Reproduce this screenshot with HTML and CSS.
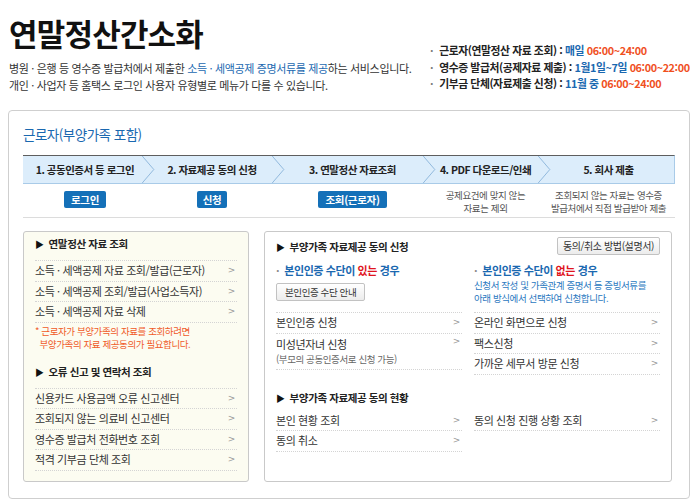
FILE: index.html
```html
<!DOCTYPE html>
<html lang="ko">

<head>
    <meta charset="UTF-8">
    <meta name="viewport" content="width=device-width, initial-scale=1.0">
    <title>연말정산간소화</title>
    <link rel="stylesheet" href="styles.css">
</head>

<body>

    <div class="top">
        <div class="intro">
            <h1>연말정산간소화</h1>
            <p>병원 · 은행 등 영수증 발급처에서 제출한 <span class="blue">소득 · 세액공제 증명서류를 제공</span>하는 서비스입니다.<br>
                개인 · 사업자 등 홈택스 로그인 사용자 유형별로 메뉴가 다를 수 있습니다.</p>
        </div>
        <ul class="hours">
            <li>근로자(연말정산 자료 조회) : <span class="blue">매일</span> <span class="orange">06:00~24:00</span></li>
            <li>영수증 발급처(공제자료 제출) : <span class="blue">1월1일~7일</span> <span class="orange">06:00~22:00</span></li>
            <li>기부금 단체(자료제출 신청) : <span class="blue">11월 중</span> <span class="orange">06:00~24:00</span></li>
        </ul>
    </div>

    <div class="card">
        <h2 class="card-title">근로자(부양가족 포함)</h2>

        <div class="steps">
            <div class="step s1">1. 공동인증서 등 로그인
                <svg class="chev" viewBox="0 0 13 28"><polyline points="0,0 12,14 0,28" /></svg>
            </div>
            <div class="step s2">2. 자료제공 동의 신청
                <svg class="chev" viewBox="0 0 13 28"><polyline points="0,0 12,14 0,28" /></svg>
            </div>
            <div class="step s3">3. 연말정산 자료조회
                <svg class="chev" viewBox="0 0 13 28"><polyline points="0,0 12,14 0,28" /></svg>
            </div>
            <div class="step s4">4. PDF 다운로드/인쇄
                <svg class="chev" viewBox="0 0 13 28"><polyline points="0,0 12,14 0,28" /></svg>
            </div>
            <div class="step s5">5. 회사 제출</div>
        </div>

        <div class="step-actions">
            <div class="act s1"><span class="blue-btn">로그인</span></div>
            <div class="act s2"><span class="blue-btn">신청</span></div>
            <div class="act s3"><span class="blue-btn">조회(근로자)</span></div>
            <div class="act s4"><p class="act-note">공제요건에 맞지 않는<br>자료는 제외</p></div>
            <div class="act s5"><p class="act-note">조회되지 않는 자료는 영수증<br>발급처에서 직접 발급받아 제출</p></div>
        </div>

        <div class="panels">
            <div class="panel panel-left">
                <h3 class="ph">연말정산 자료 조회</h3>
                <ul class="links">
                    <li>소득 · 세액공제 자료 조회/발급(근로자)</li>
                    <li>소득 · 세액공제 조회/발급(사업소득자)</li>
                    <li>소득 · 세액공제 자료 삭제</li>
                </ul>
                <p class="warn">* 근로자가 부양가족의 자료를 조회하려면<br>&nbsp;&nbsp;부양가족의 자료 제공동의가 필요합니다.</p>

                <h3 class="ph">오류 신고 및 연락처 조회</h3>
                <ul class="links">
                    <li>신용카드 사용금액 오류 신고센터</li>
                    <li>조회되지 않는 의료비 신고센터</li>
                    <li>영수증 발급처 전화번호 조회</li>
                    <li>적격 기부금 단체 조회</li>
                </ul>
            </div>

            <div class="panel panel-right">
                <div class="ph-row">
                    <h3 class="ph">부양가족 자료제공 동의 신청</h3>
                    <span class="gray-btn">동의/취소 방법(설명서)</span>
                </div>

                <div class="cols">
                    <div class="col">
                        <div class="sub-top">
                            <h4 class="sub">본인인증 수단이 <em>있는</em> 경우</h4>
                            <span class="gray-btn small">본인인증 수단 안내</span>
                        </div>
                        <ul class="links">
                            <li>본인인증 신청</li>
                            <li class="tall">미성년자녀 신청<br><span class="muted">(부모의 공동인증서로 신청 가능)</span></li>
                        </ul>
                    </div>
                    <div class="col">
                        <div class="sub-top">
                            <h4 class="sub">본인인증 수단이 <em>없는</em> 경우</h4>
                            <p class="sub-note">신청서 작성 및 가족관계 증명서 등 증빙서류를<br>아래 방식에서 선택하여 신청합니다.</p>
                        </div>
                        <ul class="links">
                            <li>온라인 화면으로 신청</li>
                            <li>팩스신청</li>
                            <li>가까운 세무서 방문 신청</li>
                        </ul>
                    </div>
                </div>

                <h3 class="ph ph-second">부양가족 자료제공 동의 현황</h3>
                <div class="cols">
                    <ul class="links col no-top">
                        <li>본인 현황 조회</li>
                        <li>동의 취소</li>
                    </ul>
                    <ul class="links col no-top">
                        <li>동의 신청 진행 상황 조회</li>
                    </ul>
                </div>
            </div>
        </div>
    </div>

</body>

</html>
```

FILE: styles.css
```css
* {
    margin: 0;
    padding: 0;
    box-sizing: border-box;
}

html,
body {
    overflow: hidden;
}

body {
    background-color: #fff;
    color: #222;
    font-family: "Noto Sans CJK KR", "Noto Sans", sans-serif;
    font-size: 11px;
    width: 690px;
}

ul {
    list-style: none;
}

.blue {
    color: #1a68b0;
}

.orange {
    color: #f0501e;
}

/* header */
.top {
    display: flex;
    padding: 14px 0 0 9px;
    height: 110px;
}

.intro {
    width: 421px;
}

.intro h1 {
    font-size: 31px;
    font-weight: bold;
    line-height: 38px;
    letter-spacing: -0.8px;
    color: #111;
}

.intro p {
    margin-top: 8px;
    font-size: 11px;
    line-height: 17px;
    letter-spacing: -0.35px;
    color: #333;
}

.hours {
    margin-top: 28px;
    white-space: nowrap;
}

.hours li {
    font-weight: bold;
    font-size: 10.8px;
    line-height: 16.5px;
    letter-spacing: -0.4px;
    color: #222;
}

.hours li::before {
    content: "·";
    color: #777;
    margin-right: 6px;
}

/* card */
.card {
    margin-left: 8px;
    width: 682px;
    height: 389px;
    border: 1px solid #cfcfcf;
    border-radius: 4px;
    padding: 13px 14px 0 14px;
}

.card-title {
    font-size: 13.5px;
    font-weight: normal;
    line-height: 20px;
    color: #1a68b0;
    letter-spacing: -0.5px;
}

.steps {
    display: flex;
    margin-top: 11px;
    height: 29px;
    background-color: #dcedfb;
    border-top: 1px solid #5e5e5e;
    border-bottom: 1px solid #a9cbe8;
    border-right: 1px solid #a9cbe8;
}

.step {
    position: relative;
    text-align: center;
    font-size: 10.5px;
    font-weight: bold;
    line-height: 27px;
    letter-spacing: -0.5px;
    color: #222;
}

.chev {
    position: absolute;
    top: 0;
    right: -8px;
    width: 13px;
    height: 27px;
    z-index: 1;
}

.chev polyline {
    fill: none;
    stroke: #8fb7dc;
    stroke-width: 1;
}

.s1 {
    width: 124px;
}

.s2 {
    width: 130px;
}

.s3 {
    width: 151px;
}

.s4 {
    width: 115px;
}

.s5 {
    width: 131px;
}

.step-actions {
    display: flex;
    height: 34px;
    border-bottom: 1px solid #dcdcdc;
}

.act {
    text-align: center;
    padding-top: 7px;
}

.blue-btn {
    display: inline-block;
    background-color: #1470b8;
    color: #fff;
    font-weight: bold;
    font-size: 10.5px;
    line-height: 17px;
    padding: 0 7px;
    border-radius: 2px;
    letter-spacing: -0.3px;
}

.s2 .blue-btn {
    padding: 0 6px;
}

.act-note {
    font-size: 9.5px;
    line-height: 12.5px;
    color: #555;
    letter-spacing: -0.4px;
    margin-top: -2px;
}

/* panels */
.panels {
    display: flex;
    gap: 15px;
    margin-top: 13px;
    height: 251px;
}

.panel {
    border: 1px solid #c9c9c9;
    border-radius: 3px;
}

.panel-left {
    width: 226px;
    background-color: #fcfcf1;
    padding: 0 11px;
}

.panel-right {
    width: 408px;
    background-color: #fff;
    padding: 0 11px;
}

.ph {
    font-size: 10.5px;
    font-weight: bold;
    line-height: 17px;
    padding: 3px 0 7px;
    letter-spacing: -0.4px;
    color: #222;
}

.ph::before {
    content: "▶";
    font-size: 9px;
    margin-right: 5px;
    color: #111;
}

.links li {
    position: relative;
    line-height: 19.5px;
    border-bottom: 1px dotted #d4d4d4;
    font-size: 11px;
    letter-spacing: -0.4px;
    color: #333;
}

.links li::after {
    content: ">";
    position: absolute;
    right: 2px;
    top: 0;
    font-family: "DejaVu Sans", sans-serif;
    font-size: 9px;
    color: #999;
}

.links {
    border-top: 1px dotted #d4d4d4;
}

.links.no-top {
    border-top: 0;
}

.warn {
    font-size: 9.5px;
    line-height: 13px;
    padding-top: 2px;
    margin-bottom: 9px;
    color: #f05a28;
    letter-spacing: -0.4px;
}

.ph-row {
    display: flex;
    justify-content: space-between;
    align-items: flex-start;
    padding-top: 5px;
}

.ph-row .ph {
    padding: 1px 0 0;
}

.gray-btn {
    display: inline-block;
    flex-shrink: 0;
    white-space: nowrap;
    font-size: 10px;
    line-height: 16px;
    padding: 0 5px;
    border: 1px solid #c2c2c2;
    border-radius: 2px;
    background: linear-gradient(#ffffff, #ececec);
    color: #333;
    letter-spacing: -0.4px;
}

.gray-btn.small {
    margin-top: 4px;
    font-size: 9.5px;
    padding: 0 8px;
}

.cols {
    display: flex;
    gap: 12px;
}

.col {
    width: 186px;
}

.sub-top {
    height: 56px;
    padding-top: 6px;
}

.sub {
    font-size: 11px;
    font-weight: bold;
    line-height: 17px;
    color: #1a68b0;
    letter-spacing: -0.4px;
}

.sub::before {
    content: "·";
    color: #888;
    margin-right: 5px;
}

.sub em {
    font-style: normal;
    color: #e0141e;
}

.sub-note {
    font-size: 9.5px;
    line-height: 13px;
    color: #2a78c0;
    letter-spacing: -0.4px;
}

.links li.tall {
    line-height: 14px;
    padding: 3px 0 3px;
}

.muted {
    color: #666;
    font-size: 9.5px;
}

.ph-second {
    padding: 14px 0 4px;
}
```
